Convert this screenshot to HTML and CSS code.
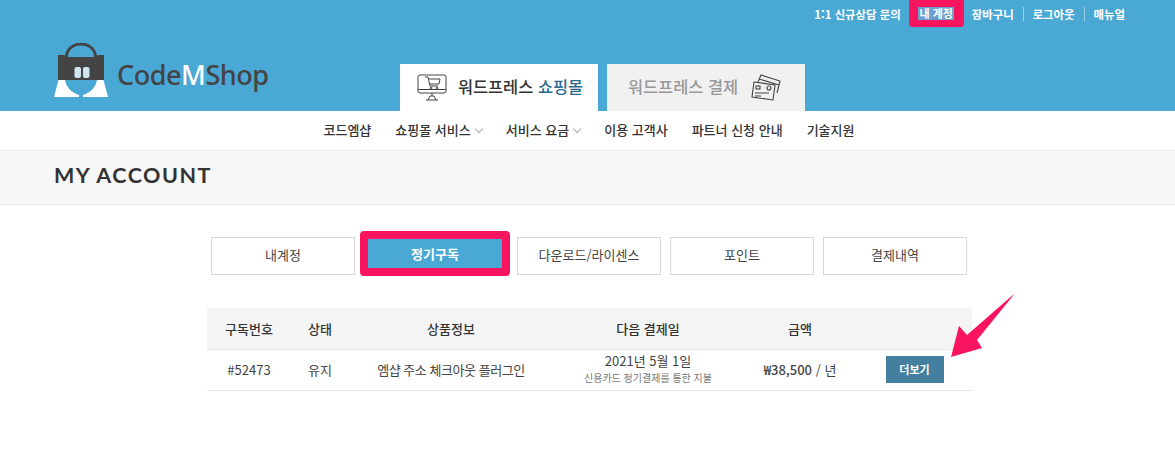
FILE: index.html
```html
<!DOCTYPE html>
<html lang="ko">
<head>
<meta charset="utf-8">
<title>My Account</title>
<link rel="stylesheet" href="styles.css">
</head>
<body>
<header class="site-header">
  <div class="top-links">
    <a class="top-link">1:1 신규상담 문의</a>
    <a class="top-link mine"><span>내 계정</span></a>
    <a class="top-link cart">장바구니</a>
    <a class="top-link sep">로그아웃</a>
    <a class="top-link sep">매뉴얼</a>
  </div>
  <div class="brand-row">
    <a class="logo">
      <svg class="logo-mark" width="54" height="54" viewBox="0 0 54 54">
        <path d="M12.5 16 C11 -4 43 -4 41.5 16" fill="none" stroke="#444" stroke-width="3"/>
        <path d="M4 12 L10 12 L13 14 L41 14 L44 12 L50 12 L50 37 L4 37 Z" fill="#444"/>
        <path d="M4.5 37 L11 37 C12 44 18 50 25 52 L25 54 L0 54 Z" fill="#fff"/>
        <path d="M49.5 37 L43 37 C42 44 36 50 29 52 L29 54 L54 54 Z" fill="#fff"/>
        <rect x="20.5" y="24" width="6.5" height="11" rx="2" fill="#cfe5f0"/>
        <rect x="29" y="24" width="6.5" height="11" rx="2" fill="#cfe5f0"/>
      </svg>
      <span class="logo-text">Code<b>M</b>Shop</span>
    </a>
    <nav class="store-tabs">
      <a class="store-tab on">
        <svg width="30" height="27" viewBox="0 0 30 27" fill="none" stroke="#444" stroke-width="1">
          <rect x="1" y="1" width="28" height="18" rx="2"/>
          <path d="M1 15.5H29M15 19v3M9 26h12M11 26l2-4h4l2 4"/>
          <path d="M8 3h3l2 9h8M12 5h11l-1 5h-9"/>
          <circle cx="14" cy="14" r="1"/><circle cx="20" cy="14" r="1"/>
        </svg>
        <span>워드프레스 <em>쇼핑몰</em></span>
      </a>
      <a class="store-tab off">
        <span>워드프레스 결제</span>
        <svg width="30" height="27" viewBox="0 0 30 27" fill="none" stroke="#444" stroke-width="1.1">
          <path d="M7 8 L10 1 L29 7 L26 19"/>
          <path d="M8 5 L28 11"/>
          <path d="M3 8 L24 11 L22 26 L1 23 Z" fill="#f1f1f1"/>
          <rect x="5" y="12" width="4" height="3"/>
          <circle cx="18" cy="14" r="2"/>
          <path d="M4 19h14M4 22h6"/>
        </svg>
      </a>
    </nav>
  </div>
</header>
<nav class="main-nav">
  <a>코드엠샵</a>
  <a>쇼핑몰 서비스<i class="chev"></i></a>
  <a>서비스 요금<i class="chev"></i></a>
  <a>이용 고객사</a>
  <a>파트너 신청 안내</a>
  <a>기술지원</a>
</nav>
<section class="title-band"><h1>MY ACCOUNT</h1></section>
<main class="acct-main">
  <div class="acct-tabs">
    <a class="acct-tab">내계정</a>
    <a class="acct-tab active"><span>정기구독</span></a>
    <a class="acct-tab">다운로드/라이센스</a>
    <a class="acct-tab">포인트</a>
    <a class="acct-tab">결제내역</a>
  </div>
  <div class="table">
    <div class="row head">
      <div class="c1">구독번호</div><div class="c2">상태</div><div class="c3">상품정보</div>
      <div class="c4">다음 결제일</div><div class="c5">금액</div><div class="c6"></div>
    </div>
    <div class="row body">
      <div class="c1">#52473</div><div class="c2">유지</div><div class="c3 product">엠샵 주소 체크아웃 플러그인</div>
      <div class="c4 when"><div>2021년 5월 1일</div><small>신용카드 정기결제를 통한 지불</small></div>
      <div class="c5"><b>₩38,500</b> / 년</div>
      <div class="c6"><a class="more">더보기</a></div>
    </div>
    <svg class="arrow" width="66" height="66" viewBox="0 0 66 66">
      <path d="M65 1 L63 4 L28 47 L33 55 L2 64 L10 33 L18 42 Z" fill="#f8145f"/>
    </svg>
  </div>
</main>
</body>
</html>
```
FILE: styles.css
```css
* { box-sizing: border-box; }
html, body { margin: 0; padding: 0; }
body { font-family: "Noto Sans CJK KR", "Noto Sans", sans-serif; color: #333; background: #fff; font-size: 12px; overflow: hidden; }
a { color: inherit; text-decoration: none; }

.site-header { background: #4aa8d5; height: 111px; display: flex; flex-direction: column; }
.top-links { display: flex; justify-content: flex-end; align-items: center; height: 27px; padding-right: 50px; color: #fff; font-size: 11.4px; font-weight: 700; }
.top-link { line-height: 14px; white-space: nowrap; }
.top-link.mine { margin-left: 8px; background: #f8145f; border-radius: 0 0 4px 4px; height: 27px; width: 55px; display: flex; align-items: center; justify-content: center; }
.mine span { background: #6b9fce; line-height: 13px; padding: 0 1px; font-size: 11px; }
.top-link.cart { margin-left: 8px; }
.top-link.sep { margin-left: 9px; padding-left: 9px; border-left: 1px solid #9ad0ea; }

.brand-row { position: relative; flex: 1; display: flex; padding-left: 54px; }
.logo { display: flex; align-items: center; height: 54px; margin-top: 16px; width: 346px; }
.logo-mark { flex: none; }
.logo-text { margin-left: 9px; margin-top: 9px; font-family: "Noto Sans", sans-serif; font-size: 27px; font-weight: 500; color: #444; letter-spacing: -0.45px; }
.logo-text b { color: #fff; font-weight: 500; }
.store-tabs { display: flex; gap: 9px; align-self: flex-end; }
.store-tab { display: flex; align-items: center; justify-content: center; width: 198px; height: 47px; font-size: 16.4px; font-weight: 500; }
.store-tab span { margin-bottom: 3px; }
.store-tab.on { gap: 11px; padding-left: 2px; background: #fff; color: #333; }
.store-tab.on em { font-style: normal; color: #2a6a8c; }
.store-tab.off { gap: 13px; padding-right: 3px; background: #f1f1f1; color: #999; }

.main-nav { height: 39px; display: flex; justify-content: center; align-items: center; gap: 24px; font-size: 13px; font-weight: 500; color: #333; padding: 0 0 3px 3px; }
.chev { display: inline-block; width: 6px; height: 6px; margin: 0 0 3px 5px; border-right: 1px solid #aaa; border-bottom: 1px solid #aaa; transform: rotate(45deg); }

.title-band { height: 55px; background: #f7f7f7; border-top: 1px solid #eaeaea; border-bottom: 1px solid #eaeaea; display: flex; align-items: center; padding: 0 0 6px 54px; }
.title-band h1 { margin: 0; font-family: "Lato", sans-serif; font-size: 21.5px; font-weight: 700; letter-spacing: 1.5px; color: #333; }

.acct-main { width: 765px; margin: 0 0 0 207px; padding-top: 26px; }
.acct-tabs { display: flex; align-items: flex-start; padding-left: 4px; height: 45px; gap: 9px; }
.acct-tab { width: 144px; height: 38px; margin-top: 6px; padding-bottom: 3px; border: 1px solid #d8d8d8; display: flex; align-items: center; justify-content: center; color: #444; font-size: 13px; }
.acct-tab.active { width: 150px; height: 45px; margin: 0 -2px 0 -4px; padding: 0; border: 8px solid #f8145f; border-radius: 4px; }
.acct-tab.active span { flex: 1; height: 100%; background: #4aa8d5; color: #fff; font-weight: 700; display: flex; align-items: center; justify-content: center; }

.table { position: relative; margin-top: 32px; font-size: 13px; }
.row { display: flex; align-items: center; text-align: center; }
.row.head { height: 42px; padding-bottom: 1px; background: #f4f4f4; border-bottom: 1px solid #e8e8e8; font-weight: 500; color: #333; }
.row.body { height: 41px; padding-bottom: 2px; border-bottom: 1px solid #e8e8e8; color: #444; }
.c1 { width: 84px; }
.c2 { width: 58px; }
.c3 { width: 204px; }
.product { letter-spacing: -0.45px; }
.c4 { width: 190px; }
.c5 { width: 114px; }
.c6 { flex: 1; display: flex; justify-content: center; }
.when { line-height: 16px; padding-bottom: 1px; }
.when small { display: block; margin-top: 2px; font-size: 10px; color: #777; line-height: 13px; }
.c5 b { font-weight: 500; }
.more { width: 58px; height: 27px; background: #447f9f; color: #fff; font-size: 11px; font-weight: 700; display: flex; align-items: center; justify-content: center; }
.arrow { position: absolute; left: 742px; top: -15px; }
```
